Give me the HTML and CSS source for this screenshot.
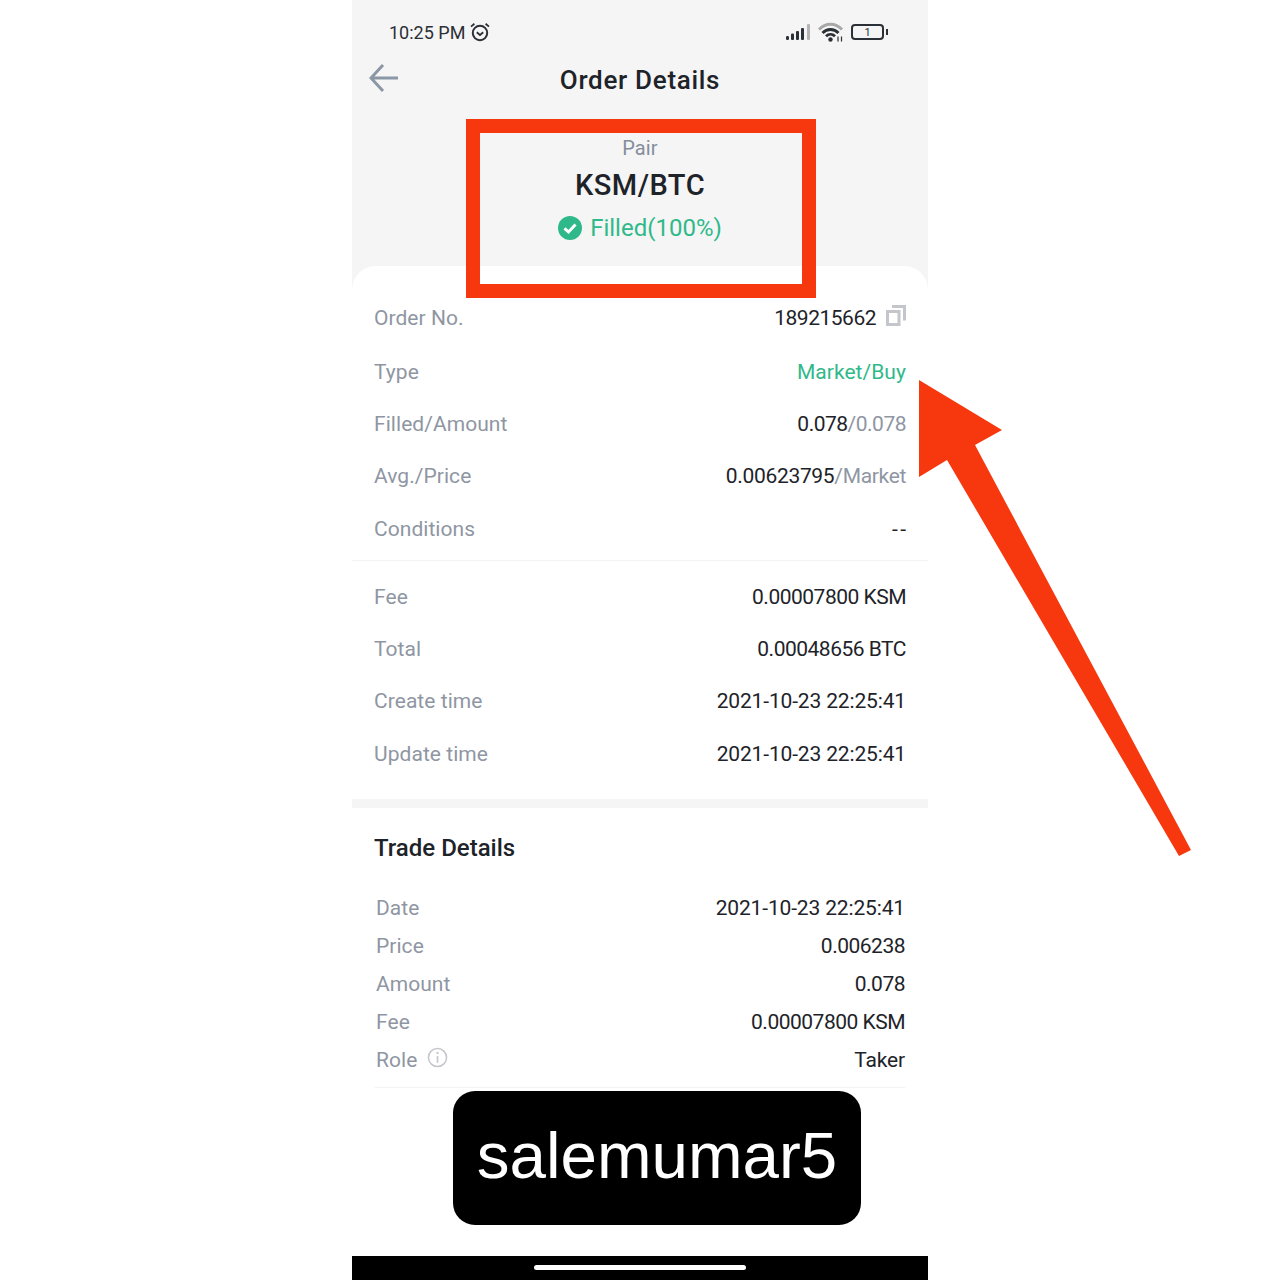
FILE: index.html
```html
<!DOCTYPE html>
<html lang="en">
  <head>
    <meta charset="UTF-8" />
    <meta name="viewport" content="width=device-width, initial-scale=1.0" />
    <link rel="stylesheet" href="styles.css">
    <title>Order Details</title>
  </head>
  <body>
    <div class="phone">
      <div class="top">
        <div class="status">
          <div class="status__left">
            <span>10:25 PM</span>
            <svg class="status__alarm" viewBox="0 0 20 20" width="20" height="20">
              <circle cx="10" cy="11" r="7.2" fill="none" stroke="#2b2f36" stroke-width="2"/>
              <path d="M6.8 10.2 10 13l3.2-2.8" fill="none" stroke="#2b2f36" stroke-width="1.8"/>
              <path d="M1 4.6 4.4 1.8M19 4.6 15.6 1.8" fill="none" stroke="#2b2f36" stroke-width="1.8"/>
            </svg>
          </div>
          <div class="status__right">
            <svg viewBox="0 0 26 18" width="26" height="18">
              <rect x="0" y="13" width="3" height="4" rx="1.2" fill="#2b2f36"/>
              <rect x="5" y="10.500" width="3" height="6.500" rx="1" fill="#2b2f36"/>
              <rect x="10" y="8" width="3" height="9" rx="1" fill="#2b2f36"/>
              <rect x="15" y="5" width="3" height="12" rx="1" fill="#2b2f36"/>
              <rect x="21" y="1" width="3" height="16" rx="1" fill="#b4b4b4"/>
            </svg>
            <svg viewBox="0 0 26 20" width="26" height="20">
              <path d="M1 7.500C7.500 .5 17.500 .5 24 7.500" fill="none" stroke="#a8a8a8" stroke-width="2.800"/>
              <path d="M4.500 11C9 6.300 16 6.300 20.500 11" fill="none" stroke="#2b2f36" stroke-width="2.800"/>
              <path d="M8 14.300c2.700-2.700 6.300-2.700 9 0" fill="none" stroke="#2b2f36" stroke-width="2.800"/>
              <circle cx="12.500" cy="17.500" r="2.200" fill="#2b2f36"/>
              <path d="M20 14.500v5M23.500 14.500v5" stroke="#2b2f36" stroke-width="1.200"/>
            </svg>
            <div class="battery"><span class="battery__level">1</span></div>
          </div>
        </div>
        <div class="nav">
          <svg class="nav__back" viewBox="0 0 30 30" width="30" height="30">
            <path d="M29 15H3M14 2 2 15l12 13" fill="none" stroke="#8c97a5" stroke-width="3"/>
          </svg>
          <h1 class="nav__title">Order Details</h1>
        </div>
        <div class="pair">
          <div class="pair__label">Pair</div>
          <div class="pair__name">KSM/BTC</div>
          <div class="pair__state">
            <svg viewBox="0 0 24 24" width="24" height="24">
              <circle cx="12" cy="12" r="12" fill="#2fb98a"/>
              <path d="M6.500 12.300 10.500 16l7-7.500" fill="none" stroke="#fff" stroke-width="3"/>
            </svg>
            <span>Filled(100%)</span>
          </div>
        </div>
      </div>

      <div class="card">
        <div class="rows rows--first">
          <div class="row row--order">
            <span class="row__key">Order No.</span>
            <span class="row__val row__val--num">189215662
              <svg class="row__copy" viewBox="0 0 20 21" width="20" height="21">
                <path d="M1.500 6.500h11.500v13H1.500z" fill="none" stroke="#c4c6cb" stroke-width="3"/>
                <path d="M6 1.500h12.500v14" fill="none" stroke="#c4c6cb" stroke-width="3"/>
              </svg>
            </span>
          </div>
          <div class="row">
            <span class="row__key">Type</span>
            <span class="row__val row__val--green">Market/Buy</span>
          </div>
          <div class="row">
            <span class="row__key">Filled/Amount</span>
            <span class="row__val row__val--num">0.078<i class="muted">/0.078</i></span>
          </div>
          <div class="row">
            <span class="row__key">Avg./Price</span>
            <span class="row__val row__val--avg">0.00623795<i class="muted">/Market</i></span>
          </div>
          <div class="row">
            <span class="row__key">Conditions</span>
            <span class="row__val row__val--empty">--</span>
          </div>
        </div>

        <div class="rows rows--second">
          <div class="row">
            <span class="row__key">Fee</span>
            <span class="row__val row__val--num">0.00007800 KSM</span>
          </div>
          <div class="row">
            <span class="row__key">Total</span>
            <span class="row__val row__val--num">0.00048656 BTC</span>
          </div>
          <div class="row">
            <span class="row__key">Create time</span>
            <span class="row__val">2021-10-23 22:25:41</span>
          </div>
          <div class="row">
            <span class="row__key">Update time</span>
            <span class="row__val">2021-10-23 22:25:41</span>
          </div>
        </div>

        <div class="trade">
          <h2 class="trade__title">Trade Details</h2>
          <div class="trade__list">
            <div class="tline">
              <span class="row__key">Date</span>
              <span class="row__val">2021-10-23 22:25:41</span>
            </div>
            <div class="tline">
              <span class="row__key">Price</span>
              <span class="row__val row__val--num">0.006238</span>
            </div>
            <div class="tline">
              <span class="row__key">Amount</span>
              <span class="row__val row__val--num">0.078</span>
            </div>
            <div class="tline">
              <span class="row__key">Fee</span>
              <span class="row__val row__val--num">0.00007800 KSM</span>
            </div>
            <div class="tline">
              <span class="row__key tline__role">Role
                <svg viewBox="0 0 22 22" width="21" height="21">
                  <circle cx="11" cy="11" r="9.500" fill="none" stroke="#c4c6cb" stroke-width="1.600"/>
                  <path d="M11 9.500v7" stroke="#c4c6cb" stroke-width="1.800"/>
                  <circle cx="11" cy="6.300" r="1.200" fill="#c4c6cb"/>
                </svg>
              </span>
              <span class="row__val">Taker</span>
            </div>
          </div>
        </div>
      </div>

      <div class="homebar"><div class="homebar__pill"></div></div>

      <div class="redbox"></div>
      <svg class="arrow" viewBox="0 0 300 500" width="300" height="500">
        <polygon points="19,10 102,60 75,75 291,480 279,486 47,90 19,107" fill="#f7380f"/>
      </svg>
      <div class="tag">salemumar5</div>
    </div>
  </body>
</html>
```

FILE: styles.css
```css
* {
  margin: 0;
  padding: 0;
  box-sizing: border-box;
}

html,
body {
  background: #fff;
}

body {
  font-family: Roboto, "Liberation Sans", sans-serif;
  color: #1e2329;
  height: 1280px;
  overflow: hidden;
}

.phone {
  width: 576px;
  height: 1280px;
  margin: 0 auto;
  background: #fff;
  display: flex;
  flex-direction: column;
}

/* gray top part */
.top {
  background: #f5f5f5;
  height: 290px;
  margin-bottom: -24px;
}

.status {
  height: 62px;
  padding: 2px 44px 0 37px;
  display: flex;
  justify-content: space-between;
  align-items: center;
}
.status__left {
  display: flex;
  align-items: center;
  gap: 5px;
  font-size: 18px;
  color: #2b2f36;
}
.status__right {
  display: flex;
  align-items: center;
  gap: 6px;
}
.battery {
  width: 33px;
  height: 16px;
  margin-left: 1px;
  border: 2px solid #2b2f36;
  border-radius: 4px;
  display: flex;
  align-items: center;
  justify-content: center;
  position: relative;
}
.battery::after {
  content: "";
  position: absolute;
  right: -6px;
  top: 3px;
  width: 2px;
  height: 6px;
  background: #2b2f36;
}
.battery__level {
  font-size: 11px;
  line-height: 11px;
  color: #2b2f36;
}

.nav {
  height: 40px;
  padding-bottom: 4px;
  display: flex;
  align-items: center;
  justify-content: center;
  position: relative;
}
.nav__back {
  position: absolute;
  left: 17px;
  top: 1px;
}
.nav__title {
  font-size: 26px;
  font-weight: 500;
  letter-spacing: 0.7px;
}

.pair {
  padding-top: 32px;
  display: flex;
  flex-direction: column;
  align-items: center;
}
.pair__label {
  font-size: 20px;
  line-height: 28px;
  letter-spacing: 0.15px;
  color: #848e9c;
}
.pair__name {
  font-size: 29px;
  line-height: 36px;
  margin-top: 5px;
  font-weight: 500;
  letter-spacing: 0.5px;
}
.pair__state {
  margin-top: 8px;
  display: flex;
  align-items: center;
  gap: 8px;
  font-size: 24px;
  line-height: 34px;
  color: #2fb98a;
}

/* white sheet */
.card {
  background: #fff;
  border-radius: 24px 24px 0 0;
  flex: 1;
  position: relative;
}

.rows {
  padding-left: 22px;
}
.rows--first {
  padding-top: 25px;
  height: 295px;
  border-bottom: 1px solid #f3f3f3;
}
.rows--second {
  padding-top: 9.500px;
  height: 247px;
  border-bottom: 9px solid #f5f5f5;
}

.row {
  height: 52.400px;
  padding-right: 22px;
  display: flex;
  justify-content: space-between;
  align-items: center;
  font-size: 21px;
}
.row--order {
  height: 55.500px;
  margin-top: -1px;
  padding-right: 22px;
}
.row__key {
  color: #8f96a3;
  letter-spacing: 0.05px;
}
.row__val {
  color: #1e2329;
  display: flex;
  align-items: center;
  letter-spacing: -0.15px;
}
.row__val--num {
  letter-spacing: -0.5px;
}
.row__val--avg {
  letter-spacing: -0.33px;
}
.row__val--green {
  color: #2fb98a;
  letter-spacing: 0.05px;
}
.row__val--empty {
  letter-spacing: 2.500px;
  margin-right: -2.500px;
}
.row__copy {
  margin-left: 10px;
  margin-top: -4px;
}
.muted {
  font-style: normal;
  color: #8f96a3;
}

.trade {
  padding: 24px 23px 0 23px;
  height: 290px;
}
.trade__title {
  font-size: 24px;
  line-height: 32px;
  font-weight: 500;
  margin-left: -1px;
}
.trade__list {
  margin-top: 25px;
  padding-bottom: 8px;
  border-bottom: 1px solid #f3f3f3;
}
.tline {
  height: 38px;
  display: flex;
  justify-content: space-between;
  align-items: center;
  font-size: 21px;
  margin-left: 1px;
}
.tline__role {
  display: flex;
  align-items: center;
  gap: 10px;
}
.tline__role svg {
  margin-top: -6px;
}

.homebar {
  height: 24px;
  background: #000;
  display: flex;
  justify-content: center;
  padding-top: 9px;
}
.homebar__pill {
  width: 212px;
  height: 5px;
  border-radius: 3px;
  background: #fff;
}

/* annotations on top of the screenshot */
.redbox {
  position: absolute;
  left: 466px;
  top: 119px;
  width: 350px;
  height: 179px;
  border: 14px solid #f7380f;
}
.arrow {
  position: absolute;
  left: 900px;
  top: 370px;
}
.tag {
  position: absolute;
  left: 453px;
  top: 1091px;
  width: 408px;
  height: 134px;
  padding-bottom: 5px;
  background: #000;
  border-radius: 22px;
  display: flex;
  align-items: center;
  justify-content: center;
  color: #fff;
  font-family: "Liberation Sans", sans-serif;
  font-size: 65.500px;
}
```
